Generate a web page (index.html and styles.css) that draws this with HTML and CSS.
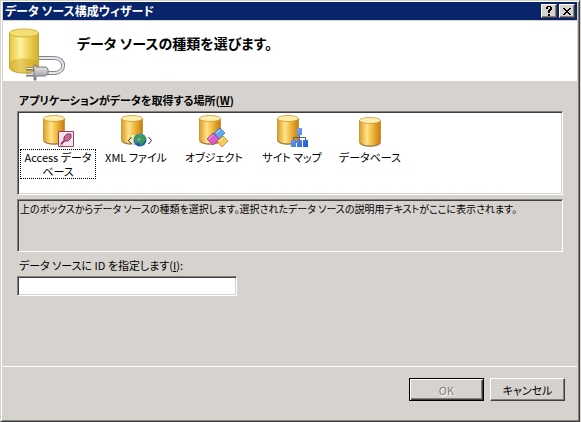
FILE: index.html
```html
<!DOCTYPE html>
<html lang="ja">
<head>
<meta charset="utf-8">
<title>データ ソース構成ウィザード</title>
<link rel="stylesheet" href="styles.css">
</head>
<body>
<svg class="defs" aria-hidden="true">
  <defs>
    <linearGradient id="gold">
      <stop offset="0" stop-color="#dc9c25"/><stop offset=".35" stop-color="#ffe38a"/>
      <stop offset=".6" stop-color="#f2bd40"/><stop offset="1" stop-color="#c77b10"/>
    </linearGradient>
    <linearGradient id="yellow">
      <stop offset="0" stop-color="#e3c43c"/><stop offset=".38" stop-color="#fff3a0"/>
      <stop offset=".65" stop-color="#efd45a"/><stop offset="1" stop-color="#d3ae30"/>
    </linearGradient>
    <linearGradient id="metal" x2="0" y2="1">
      <stop offset="0" stop-color="#f2f2f2"/><stop offset="1" stop-color="#8a8a92"/>
    </linearGradient>
    <linearGradient id="blue" x2="1" y2="1">
      <stop offset="0" stop-color="#8db8ff"/><stop offset="1" stop-color="#1c56cc"/>
    </linearGradient>
    <radialGradient id="globe" cx=".35" cy=".3">
      <stop offset="0" stop-color="#a9d4ff"/><stop offset="1" stop-color="#1c55b5"/>
    </radialGradient>
    <g id="cylinder">
      <path d="M1.500 3.500v22c0 5 21 5 21 0v-22z" fill="url(#gold)" stroke="#c58a2c" stroke-width=".8"/>
      <path d="M2.500 26c1 4 18 4 19 0" fill="none" stroke="#8e7660" stroke-width="1"/>
      <ellipse cx="12" cy="3.500" rx="10.500" ry="3" fill="#fff0b0" stroke="#cf9734" stroke-width=".8"/>
    </g>
  </defs>
</svg>
<main class="window">
  <header class="titlebar">
    <h1>データ ソース構成ウィザード</h1>
    <button class="caption" type="button" aria-label="ヘルプ">
      <svg width="10" height="10" viewBox="0 0 10 10" shape-rendering="crispEdges"><path d="M2 1h1V0h4v1h1v3H7v1H6v2H4V4h1V3h1V1H4v2H2zM4 8h2v2H4z"/></svg>
    </button>
    <button class="caption" type="button" aria-label="閉じる">
      <svg width="10" height="10" viewBox="0 0 10 10" shape-rendering="crispEdges"><path d="M1 2h2v1h1v1h2V3h1V2h2v1H8v1H7v1H6v1h1v1h1v1h1v1H7V8H6V7H4v1H3v1H1V8h1V7h1V6h1V5H3V4H2V3H1z"/></svg>
    </button>
  </header>
  <section class="banner">
    <svg width="60" height="56" viewBox="0 0 60 56" aria-hidden="true">
      <path d="M2.500 8v34c0 8 29 8 29 0V8z" fill="url(#yellow)" stroke="#c9a52c"/>
      <path d="M2.500 38c3-6 26-6 29 0v4c0 8-29 8-29 0z" fill="#c99f1c" opacity=".45"/>
      <ellipse cx="17" cy="8" rx="14.500" ry="4" fill="#f3df70" stroke="#d3b13c"/>
      <path d="M32 33h15c12 0 12 14 1 15h-9" fill="none" stroke="#85858c" stroke-width="4"/>
      <path d="M32 33h15c12 0 12 14 1 15h-9" fill="none" stroke="#e7e7eb" stroke-width="2"/>
      <path d="M19 44h10M19 50h10" stroke="#77777f" stroke-width="3"/>
      <path d="M19 43.500h10M19 49.500h10" stroke="#e5e5e8" stroke-width="1"/>
      <path d="M27 40h2v2h10l2 2v5l-3 2h-9v4h-2z" fill="url(#metal)" stroke="#77777f"/>
    </svg>
    <h2>データ ソースの種類を選びます。</h2>
  </section>
  <form class="content">
    <h3 id="where">アプリケーションがデータを取得する場所(<u>W</u>)</h3>
    <div class="sources" role="group" aria-labelledby="where">
      <button class="source focused" type="button">
        <svg width="32" height="34" viewBox="0 0 32 34" aria-hidden="true">
          <use href="#cylinder"/>
          <path d="M16.500 16.500h15v15h-15z" fill="#f8e3ed" stroke="#954367"/>
          <path d="M19 29l5-5" stroke="#973b68" stroke-width="2"/>
          <path d="M22 22l3-3h4v4l-3 3h-4z" fill="#c26b94" stroke="#8f3561"/>
          <path d="M18 30h3" stroke="#b58599"/>
        </svg>
        <span>Access データ<br>ベース</span>
      </button>
      <button class="source" type="button">
        <svg width="32" height="34" viewBox="0 0 32 34" aria-hidden="true">
          <use href="#cylinder"/>
          <path d="M8 25l4-5h3v11h-3z" fill="#fff" opacity=".6"/>
          <circle cx="20" cy="25" r="6.500" fill="url(#globe)"/>
          <path d="M14 22l3-3 4 1-1 3-3 1 1 3-2 1-2-3zM22 20l3 1 1 4-3 3-2 3-2-4 2-2-1-3z" fill="#3c9b4c"/>
          <path d="M11.500 22L8.500 25.500l3 3.500M28.500 22l3 3.500-3 3.500" fill="none" stroke="#222"/>
        </svg>
        <span>XML ファイル</span>
      </button>
      <button class="source" type="button">
        <svg width="32" height="34" viewBox="0 0 32 34" aria-hidden="true">
          <use href="#cylinder"/>
          <path d="M9 24l6-6 6 6-6 6z" fill="#dd59ce" stroke="#a13b9a" stroke-width=".7"/>
          <path d="M16 18l6-5 5 5-6 6z" fill="#61a9ee" stroke="#2a66ae" stroke-width=".7"/>
          <path d="M19 26l6-5 5 5-6 6z" fill="#f8cc5b" stroke="#ae761b" stroke-width=".7"/>
          <path d="M11 24l4-4M18 18l4-3M21 26l4-3" stroke="#fff" opacity=".7"/>
        </svg>
        <span>オブジェクト</span>
      </button>
      <button class="source" type="button">
        <svg width="32" height="34" viewBox="0 0 32 34" aria-hidden="true">
          <use href="#cylinder"/>
          <path d="M23.500 19v7M17.500 26v-3.500h12V26" fill="none" stroke="#426785"/>
          <path d="M21 13h5v7h-5zM15 25h5v7h-5zM21 25h5v7h-5zM27 25h5v7h-5z" fill="url(#blue)"/>
        </svg>
        <span>サイト マップ</span>
      </button>
      <button class="source" type="button">
        <svg width="24" height="34" viewBox="0 -2 24 34" aria-hidden="true"><use href="#cylinder"/></svg>
        <span>データベース</span>
      </button>
    </div>
    <p class="description">上のボックスからデータ ソースの種類を選択します。選択されたデータ ソースの説明用テキストがここに表示されます。</p>
    <label for="source-id">データ ソースに ID を指定します(<u>I</u>):</label>
    <input id="source-id" type="text">
  </form>
  <footer class="actions">
    <button class="action default" type="button" disabled>OK</button>
    <button class="action" type="button">キャンセル</button>
  </footer>
</main>
</body>
</html>
```
FILE: styles.css
```css
* {
  box-sizing: border-box;
}

body {
  margin: 0;
  background: #d6d3ce;
  color: #000;
  font: 11px/14px "Noto Sans CJK JP", sans-serif;
  font-feature-settings: "palt";
}

h1, h2, h3, p {
  margin: 0;
}

button, input {
  font: inherit;
  font-feature-settings: inherit;
  color: inherit;
}

.defs {
  position: absolute;
  width: 0;
  height: 0;
}

.window {
  display: flex;
  flex-direction: column;
  min-height: 100vh;
  margin-right: 1px;
  padding: 1px;
  border: 1px solid #404040;
  border-top-color: #d6d3ce;
  border-left-color: #d6d3ce;
  box-shadow: inset 1px 1px #fff, inset -1px -1px #808080;
}

.titlebar {
  display: flex;
  align-items: center;
  gap: 2px;
  height: 18px;
  margin: 0 1px;
  padding: 0 2px;
  background: #08246b;
  color: #fff;
}

.titlebar h1 {
  flex: 1;
  font-size: 12px;
  line-height: 16px;
}

.caption {
  display: grid;
  place-items: center;
  width: 16px;
  height: 14px;
  padding: 0;
  background: #d6d3ce;
  border: 1px solid;
  border-color: #fff #404040 #404040 #fff;
  box-shadow: inset -1px -1px #808080;
}

.banner {
  display: flex;
  gap: 10px;
  height: 60px;
  margin: 1px 1px 0;
  padding: 4px 2px 0 4px;
  background: #fff;
}

.banner h2 {
  margin-top: 8px;
  font-size: 14px;
  line-height: 20px;
}

.content {
  display: flex;
  flex: 1;
  flex-direction: column;
  padding: 12px 15px 0;
}

.content h3 {
  margin-bottom: 4px;
  padding-left: 2px;
  font-size: 11px;
  line-height: 14px;
}

.sources, .description, .content input {
  border: 1px solid;
  border-color: #808080 #fff #fff #808080;
}

.sources {
  display: flex;
  height: 84px;
  padding: 3px 1px;
  background: #fff;
  box-shadow: inset 1px 1px #404040, inset -1px -1px #d6d3ce;
}

.source {
  display: flex;
  flex-direction: column;
  align-items: center;
  width: 78px;
  height: 66px;
  padding: 0;
  background: none;
  border: 0;
}

.source svg {
  flex: none;
  margin-bottom: 1px;
}

.source span {
  padding: 0 1px;
  line-height: 14px;
  white-space: nowrap;
}

.source.focused span {
  width: 74px;
  outline: 1px dotted #000;
}

.description {
  height: 53px;
  margin: 4px 0 6px;
  padding: 2px;
  font-size: 10px;
  box-shadow: inset 1px 1px #404040;
}

.content label {
  margin-bottom: 4px;
  padding-left: 2px;
}

.content input {
  width: 220px;
  height: 20px;
  padding: 2px 4px;
  background: #fff;
  box-shadow: inset 1px 1px #404040, inset -1px -1px #d6d3ce;
}

.actions {
  display: flex;
  justify-content: flex-end;
  gap: 6px;
  margin: 0 1px;
  padding: 11px 12px 19px;
  border-top: 1px solid #fff;
}

.action {
  width: 75px;
  height: 23px;
  padding: 0;
  background: #d6d3ce;
  border: 1px solid;
  border-color: #fff #404040 #404040 #fff;
  box-shadow: inset -1px -1px #808080;
}

.action.default {
  border-color: #000;
  box-shadow: inset 1px 1px #fff, inset -1px -1px #404040, inset -2px -2px #808080;
}

.action:disabled {
  color: #808080;
  text-shadow: 1px 1px #fff;
}
```
